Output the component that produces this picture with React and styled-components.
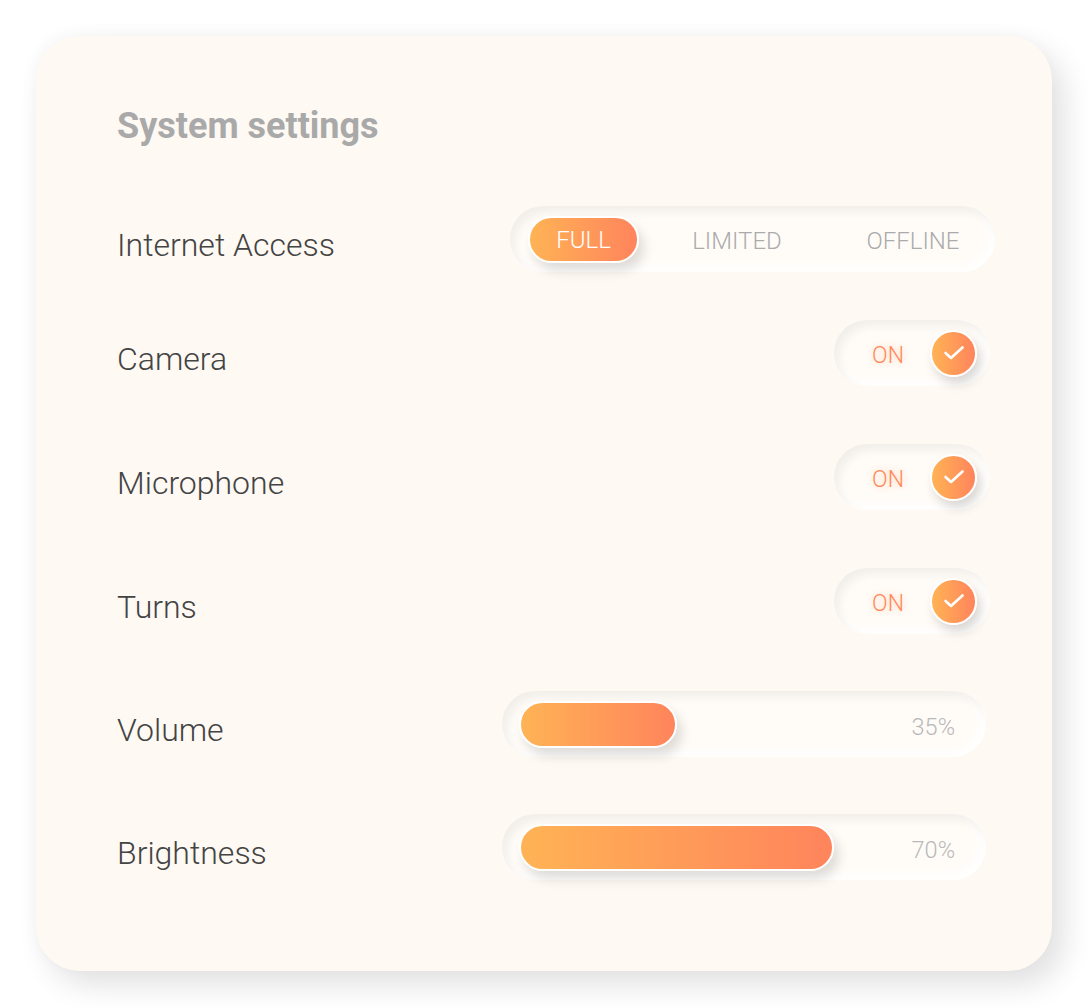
import React from "react";
import styled, { createGlobalStyle } from "styled-components";

const GlobalStyle = createGlobalStyle`
  html, body {
    margin: 0;
    padding: 0;
    background: #ffffff;
  }
  body {
    font-family: Roboto, "Liberation Sans", sans-serif;
  }
`;

const Page = styled.div`
  padding: 36px;
`;

const Card = styled.div`
  width: 1016px;
  box-sizing: border-box;
  padding: 70px 0 91px 81px;
  background: #fef9f3;
  border-radius: 44px;
  box-shadow: 12px 14px 30px rgba(0, 0, 0, 0.12), -4px -4px 16px rgba(0, 0, 0, 0.025);
`;

const Title = styled.h1`
  margin: 0 0 60px;
  font-size: 36px;
  line-height: 40px;
  font-weight: 700;
  color: #a9a9a9;
`;

const List = styled.div`
  display: flex;
  flex-direction: column;
`;

const Row = styled.div`
  display: flex;
  align-items: center;
  justify-content: space-between;
  height: 66px;
  margin-top: ${(p) => p.$space || 0}px;
`;

const Label = styled.span`
  padding-top: 12px;
  font-size: 32px;
  font-weight: 300;
  color: #444;
`;

const orange = "linear-gradient(90deg, #ffb355 0%, #ff845c 100%)";

const Track = styled.div`
  box-sizing: border-box;
  height: 66px;
  width: ${(p) => p.$w}px;
  margin-right: ${(p) => p.$inset}px;
  border-radius: 33px;
  background: #fffcf8;
  box-shadow: inset 5px 6px 10px rgba(0, 0, 0, 0.055),
    inset -5px -5px 10px rgba(255, 255, 255, 0.95);
`;

const Segmented = styled(Track)`
  display: grid;
  grid-template-columns: 111px 196px 1fr;
  align-items: center;
  padding: 0 4px 0 18px;
`;

const Option = styled.span`
  display: flex;
  align-items: center;
  justify-content: center;
  box-sizing: border-box;
  height: 47px;
  padding-top: 3px;
  font-size: 24px;
  font-weight: 300;
  color: ${(p) => (p.$active ? "#fff" : "#ababab")};
  ${(p) =>
    p.$active &&
    `
    padding-top: 1px;
    border: 2px solid #fff;
    border-radius: 24px;
    background: ${orange};
    box-shadow: 5px 8px 12px rgba(0, 0, 0, 0.13);
  `}
`;

const Toggle = styled(Track)`
  display: flex;
  align-items: center;
  justify-content: flex-end;
  gap: 26px;
  padding-right: 13px;
`;

const OnText = styled.span`
  padding-top: 5px;
  font-size: 23px;
  font-weight: 300;
  color: #ff8a5c;
  text-shadow: 0 0 8px rgba(255, 170, 110, 0.55);
`;

const Knob = styled.span`
  display: flex;
  align-items: center;
  justify-content: center;
  box-sizing: border-box;
  width: 47px;
  height: 47px;
  border: 2px solid #fff;
  border-radius: 50%;
  background: ${orange};
  box-shadow: 4px 7px 11px rgba(0, 0, 0, 0.15);
`;

const Slider = styled(Track)`
  display: flex;
  align-items: center;
  justify-content: space-between;
  padding: 0 31px 0 17px;
`;

const Fill = styled.span`
  box-sizing: border-box;
  height: 47px;
  border: 2px solid #fff;
  border-radius: 24px;
  background: ${orange};
  box-shadow: 5px 8px 12px rgba(0, 0, 0, 0.13);
`;

const Percent = styled.span`
  padding-top: 5px;
  font-size: 23.5px;
  font-weight: 300;
  color: #b8b8b8;
`;

const Check = () => (
  <svg width="22" height="16" viewBox="0 0 22 16" fill="none">
    <polyline
      points="2.5,8 8,13 19.5,2.5"
      stroke="#fff"
      strokeWidth="2.6"
      strokeLinecap="round"
      strokeLinejoin="round"
    />
  </svg>
);

const switches = ["Camera", "Microphone", "Turns"];
const levels = [
  { name: "Volume", value: 35 },
  { name: "Brightness", value: 70 },
];

export default function App() {
  return (
    <Page>
      <GlobalStyle />
      <Card>
        <Title>System settings</Title>
        <List>
          <Row>
            <Label>Internet Access</Label>
            <Segmented $w={485} $inset={57}>
              <Option $active>FULL</Option>
              <Option>LIMITED</Option>
              <Option>OFFLINE</Option>
            </Segmented>
          </Row>
          {switches.map((name, i) => (
            <Row key={name} $space={i === 0 ? 48 : 58}>
              <Label>{name}</Label>
              <Toggle $w={156} $inset={62}>
                <OnText>ON</OnText>
                <Knob>
                  <Check />
                </Knob>
              </Toggle>
            </Row>
          ))}
          {levels.map((l) => (
            <Row key={l.name} $space={57}>
              <Label>{l.name}</Label>
              <Slider $w={484} $inset={66}>
                <Fill style={{ width: `${(l.value / 100) * 450}px` }} />
                <Percent>{l.value}%</Percent>
              </Slider>
            </Row>
          ))}
        </List>
      </Card>
    </Page>
  );
}
